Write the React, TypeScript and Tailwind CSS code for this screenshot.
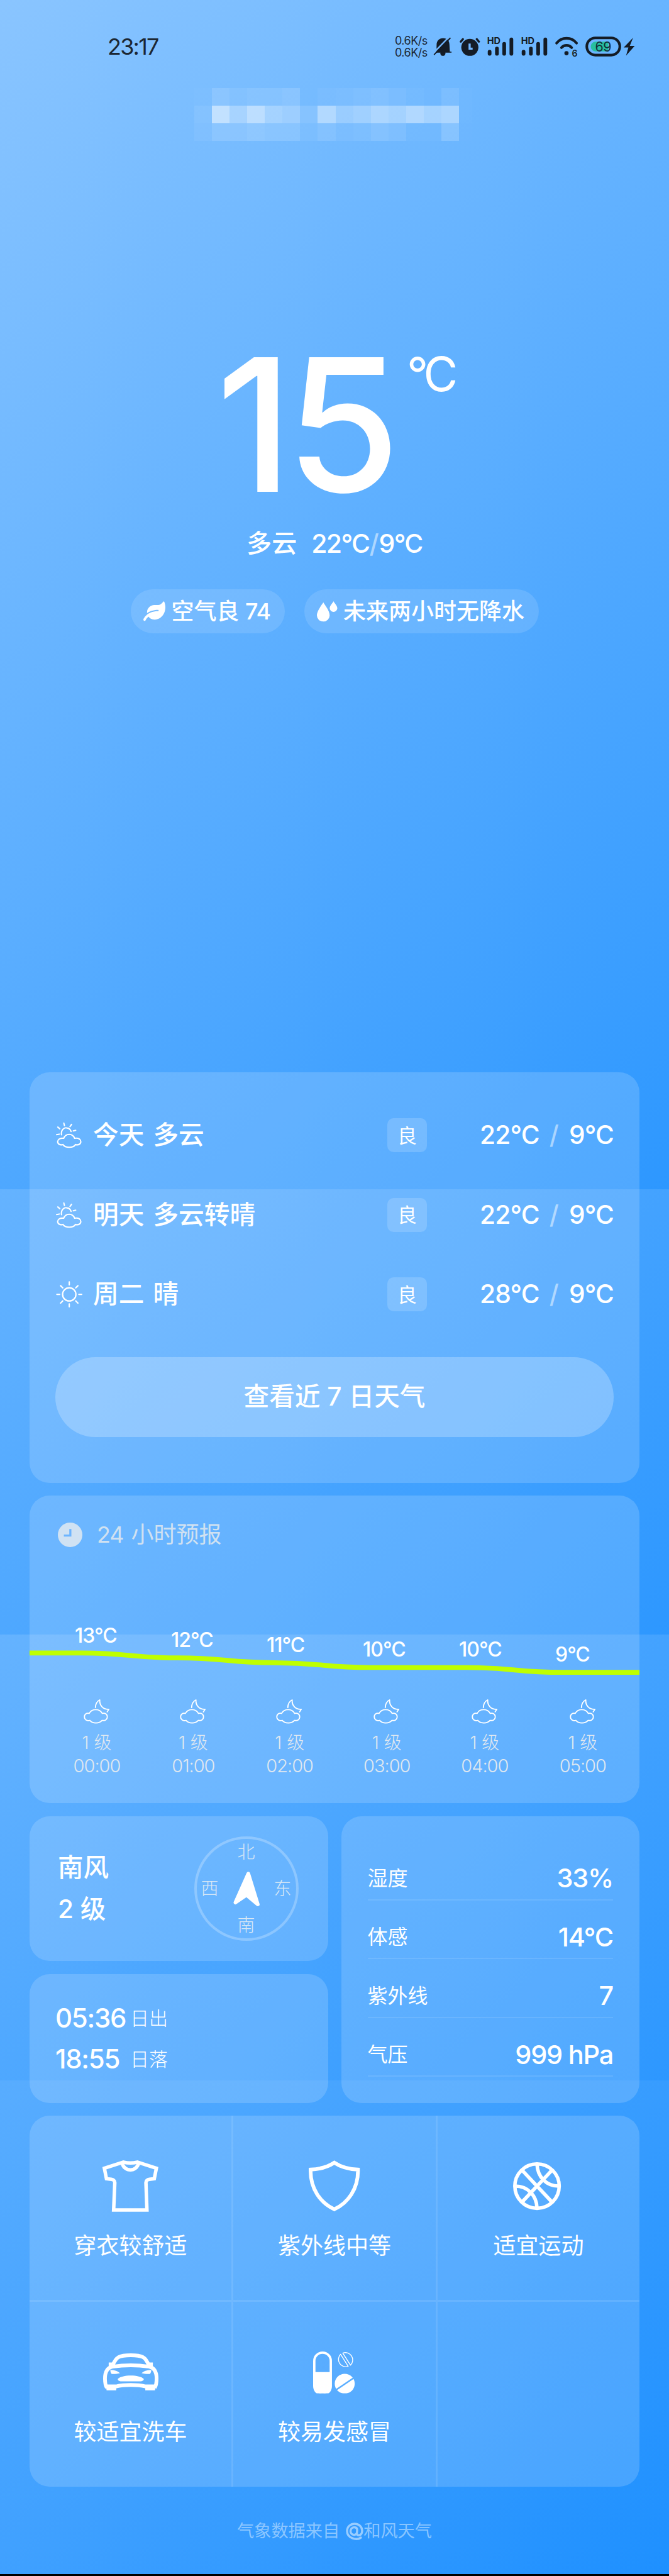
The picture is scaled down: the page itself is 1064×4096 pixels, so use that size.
import type { ReactNode } from "react";

const INK = "#141c26";

type DrawingProps = {
  width: number;
  height: number;
  box: string;
  className?: string;
  children: ReactNode;
};

function Drawing({ width, height, box, className = "", children }: DrawingProps) {
  return (
    <svg
      width={width}
      height={height}
      viewBox={box}
      fill="none"
      strokeLinecap="round"
      strokeLinejoin="round"
      className={`block shrink-0 overflow-visible ${className}`}
    >
      {children}
    </svg>
  );
}

/* ---------- status bar ---------- */

function MutedBell() {
  return (
    <Drawing width={28.8} height={28.8} box="0 0 39 39" className="ml-2">
      <path d="M20 1C11 1 6 7 6 15L5.5 30H34.5L33.5 14C33 6 29 1 20 1Z" fill={INK} />
      <path d="M6 31H37" stroke={INK} strokeWidth={2.6} />
      <circle cx={19.5} cy={33.5} r={5.6} fill={INK} />
      <path d="M-1 33L31 0" stroke="#74b8ff" strokeWidth={3.4} />
      <path d="M1 36L35 1" stroke={INK} strokeWidth={2.6} />
    </Drawing>
  );
}

function Alarm() {
  return (
    <Drawing width={32.5} height={28.8} box="0 0 44 39" className="ml-3">
      <circle cx={22} cy={20.7} r={18.4} fill={INK} />
      <path d="M2.5 8.5L7 3M41.5 8.5L37 3" stroke={INK} strokeWidth={4.6} />
      <path d="M21.5 12.5V23.5H28" stroke="#72b7ff" strokeWidth={4.6} strokeLinecap="butt" strokeLinejoin="miter" />
    </Drawing>
  );
}

function Signal() {
  return (
    <Drawing width={42} height={29.6} box="0 0 57 40" className="ml-3">
      <g fill={INK}>
        <rect x={1} y={27.5} width={8} height={12.5} rx={4} />
        <rect x={16.8} y={20.5} width={8} height={19.5} rx={4} />
        <rect x={32.5} y={10.5} width={8} height={29.5} rx={4} />
        <rect x={48} y={1} width={8} height={39} rx={4} />
        <text x={-0.5} y={15.5} fontSize={20} fontWeight={700} textLength={29} lengthAdjust="spacingAndGlyphs">
          HD
        </text>
      </g>
    </Drawing>
  );
}

function Wifi() {
  return (
    <Drawing width={36.2} height={31.8} box="0 0 49 43" className="ml-3">
      <path d="M3 14.3C14 0.5 35 0.5 46 14.3" stroke={INK} strokeWidth={5.6} />
      <path d="M13.5 24C19 17.5 30 17.5 35.5 24" stroke={INK} strokeWidth={5.6} />
      <circle cx={24.3} cy={36} r={4.5} fill={INK} />
      <text x={36} y={43} fontSize={19} fontWeight={600} fill={INK}>
        6
      </text>
    </Drawing>
  );
}

function Battery() {
  return (
    <Drawing width={57} height={31.8} box="0 0 77 43" className="ml-[11px]">
      <rect x={3} y={3} width={71} height={37} rx={18.5} stroke={INK} strokeWidth={5.6} />
      <path d="M49 11H22a10.5 10.5 0 0 0 0 21H49Z" fill="#27bfa0" />
      <text x={21} y={32.5} fontSize={29} fontWeight={400} fill="#12303a" textLength={35}>
        69
      </text>
    </Drawing>
  );
}

function Bolt() {
  return (
    <Drawing width={17.5} height={28.6} box="0 0 23.6 38.6" className="ml-1">
      <path d="M20 0L0 21H10L5 38.6L23.5 17.5H13Z" fill={INK} />
    </Drawing>
  );
}

function StatusBar() {
  return (
    <div className="flex h-10 items-center text-[#1c2733]">
      <span className="ml-[171px] text-[36px] leading-none tracking-[-0.05em]">23:17</span>
      <div className="ml-auto mr-[55px] flex items-center">
        <div className="flex w-[54px] flex-col text-[18px] leading-[19.4px] tracking-[-0.03em] whitespace-nowrap">
          <span>0.6K/s</span>
          <span>0.6K/s</span>
        </div>
        <MutedBell />
        <Alarm />
        <Signal />
        <Signal />
        <Wifi />
        <Battery />
        <Bolt />
      </div>
    </div>
  );
}

/* ---------- obscured location ---------- */

const MOSAIC = [
  [0.02, 0.13, 0.08, 0.11, 0.11, 0.14, 0, 0.04, 0.05, 0.08, 0.11, 0.07, 0.03, 0.01, 0.09, 0.02],
  [0.08, 0.55, 0.35, 0.51, 0.34, 0.29, 0.13, 0.45, 0.28, 0.33, 0.42, 0.37, 0.46, 0.38, 0.43, 0.02],
  [0.06, 0.14, 0.14, 0.18, 0.15, 0.15, 0.06, 0.12, 0.07, 0.09, 0.14, 0.11, 0.03, 0.03, 0.18, 0.01],
];

function Mosaic() {
  return (
    <div className="ml-[309px] mt-[46px] flex w-[442px] flex-col overflow-hidden">
      {MOSAIC.map((row, r) => (
        <div key={r} className="flex h-7">
          {row.map((alpha, c) => (
            <span
              key={c}
              className="h-full w-[28.07px] shrink-0"
              style={{ backgroundColor: `rgba(255,255,255,${alpha})` }}
            />
          ))}
        </div>
      ))}
    </div>
  );
}

/* ---------- current conditions ---------- */

function Leaf() {
  return (
    <Drawing width={35} height={31.5} box="0 0 576 512">
      <path
        fill="#fff"
        d="M546.2 9.7c-5.6-12.5-21.6-13-28.3-1.2C486.9 62.4 431.4 96 368 96h-80C182 96 96 182 96 288c0 7 .8 13.7 1.5 20.5C161.3 262.8 253.4 224 384 224c8.8 0 16 7.2 16 16s-7.2 16-16 16C132.6 256 26 410.1 2.4 468c-6.6 16.3 1.2 34.9 17.5 41.6 16.4 6.8 35-1.1 41.8-17.3 1.5-3.6 20.9-47.9 71.9-90.6 32.4 43.9 94 85.8 174.9 77.2C465.5 467.5 576 326.7 576 154.3c0-50.2-10.8-102.2-29.8-144.6z"
      />
    </Drawing>
  );
}

function Drops() {
  return (
    <Drawing width={32.5} height={32.5} box="0 0 44 44">
      <path fill="#fff" d="M13.8 2.5C16 7 27.5 20 27.5 30.5a13.75 13.3 0 0 1-27.5 0C0 20 11.5 7 13.8 2.5Z" />
      <path fill="#fff" d="M35.8 0C37 3 44 10 44 15a8.2 8 0 0 1-16.4 0C27.6 10 34.5 3 35.8 0Z" />
    </Drawing>
  );
}

function Hero() {
  return (
    <section className="mt-[304px] flex flex-col items-center text-white">
      <div className="flex items-start font-medium leading-none">
        <span className="ml-px text-[294px] tracking-[-0.036em]">15</span>
        <span className="ml-[21px] mt-[29px] text-[75px] font-normal tracking-[-0.09em]">°C</span>
      </div>
      <div className="mt-[14px] flex h-14 items-center text-[41px] font-medium leading-none">
        <span className="text-[40px]">多云</span>
        <span className="ml-[23px] tracking-[-0.04em]">22°C</span>
        <span className="text-white/50">/</span>
        <span className="tracking-[-0.04em]">9°C</span>
      </div>
      <div className="mt-[45px] flex gap-[31px] text-[36px] font-medium leading-none">
        <div className="flex h-[70px] w-[245px] items-center rounded-full bg-white/12 pl-5">
          <Leaf />
          <span className="ml-[10px] whitespace-nowrap">
            空气良 <span className="tracking-[-0.03em]">74</span>
          </span>
        </div>
        <div className="flex h-[70px] w-[373px] items-center rounded-full bg-white/12 pl-5">
          <Drops />
          <span className="ml-[10px] whitespace-nowrap">未来两小时无降水</span>
        </div>
      </div>
    </section>
  );
}

/* ---------- three day forecast ---------- */

function SunCloud() {
  return (
    <Drawing width={43} height={44.3} box="55 40 175 180">
      <g stroke="#fff" strokeWidth={8.5}>
        <path d="M109 150C122 116 167 116 180 150C205 144 220 158 220 171C220 186 205 196 186 190C170 214 120 214 104 190C85 196 70 186 70 171C70 158 85 146 109 150Z" />
        <path d="M95 127C90 95 112 80 127 82C142 83 153 92 157 106" />
        <path d="M110 51L114 67M160 60L150 74M187 98L171 102M71 77L84 88M63 126L80 123" />
      </g>
    </Drawing>
  );
}

function Sun() {
  return (
    <Drawing width={44.3} height={44.3} box="50 557 180 180">
      <g stroke="#fff" strokeWidth={9}>
        <circle cx={140} cy={647} r={43} />
        <path d="M140 567V585M140 709V727M60 647H78M202 647H220M182 605L196 591M98 605L84 591M182 689L196 703M98 689L84 703" />
      </g>
    </Drawing>
  );
}

const DAYS = [
  { icon: <SunCloud />, day: "今天", sky: "多云", air: "良", high: "22°C", low: "9°C" },
  { icon: <SunCloud />, day: "明天", sky: "多云转晴", air: "良", high: "22°C", low: "9°C" },
  { icon: <Sun />, day: "周二", sky: "晴", air: "良", high: "28°C", low: "9°C" },
];

function DailyCard() {
  return (
    <section className="mt-[698px] h-[653px] rounded-[32px] bg-white/16 px-[41px] pt-[37px]">
      {DAYS.map((d) => (
        <div key={d.day} className="flex h-[126.6px] items-center text-[40.7px] font-medium leading-none">
          <div className="w-[60px]">{d.icon}</div>
          <span>{d.day}</span>
          <span className="ml-[14px]">{d.sky}</span>
          <span className="ml-auto flex h-[54px] w-[63px] items-center justify-center rounded-[10px] bg-white/16 text-[31px] font-normal">
            {d.air}
          </span>
          <div className="flex w-[297px] items-center justify-end">
            <span className="tracking-[-0.02em]">{d.high}</span>
            <span className="ml-4 text-white/50">/</span>
            <span className="ml-4 tracking-[-0.02em]">{d.low}</span>
          </div>
        </div>
      ))}
      <button className="mt-[36px] flex h-[127px] w-full items-center justify-center rounded-full bg-white/24 text-[40.7px] font-medium leading-none">
        查看近 7 日天气
      </button>
    </section>
  );
}

/* ---------- hourly forecast ---------- */

const HOURS = [
  { temp: "13°C", time: "00:00", labelX: 72, level: 0, gap: "ml-[57px]" },
  { temp: "12°C", time: "01:00", labelX: 225, level: 1, gap: "ml-[53.4px]" },
  { temp: "11°C", time: "02:00", labelX: 377, level: 2, gap: "ml-[53.3px]" },
  { temp: "10°C", time: "03:00", labelX: 530, level: 3, gap: "ml-[54.6px]" },
  { temp: "10°C", time: "04:00", labelX: 683, level: 3, gap: "ml-[55.6px]" },
  { temp: "9°C", time: "05:00", labelX: 836, level: 4, gap: "ml-[56px]" },
];

function MoonCloud() {
  return (
    <Drawing width={42.4} height={41} box="88 44 172 166">
      <g stroke="#fff" strokeWidth={7.5}>
        <path d="M124 139C140 106 192 106 208 139C228 134 241 146 241 161C241 178 226 188 207 184C190 206 144 206 128 184C108 190 93 178 93 161C93 146 106 134 124 139Z" />
        <path d="M164 101C165 75 175 60 192 52C190 90 215 115 251 112L240 129" />
      </g>
    </Drawing>
  );
}

function HourlyChart() {
  const y = (level: number) => 40.4 + level * 7.7;
  const nodeX = (i: number) => 83 + i * 153;
  let d = `M0 ${y(0)}H${nodeX(0)}`;
  for (let i = 1; i < HOURS.length; i++) {
    const mid = (nodeX(i - 1) + nodeX(i)) / 2;
    d += `C${mid} ${y(HOURS[i - 1].level)} ${mid} ${y(HOURS[i].level)} ${nodeX(i)} ${y(HOURS[i].level)}`;
  }
  d += "H970";
  return (
    <svg width={970} height={90} viewBox="0 0 970 90" className="block overflow-visible">
      <path d={d} fill="none" stroke="#bfff00" strokeWidth={7.7} />
      {HOURS.map((h) => (
        <text
          key={h.time}
          x={h.labelX}
          y={24 + h.level * 7.45}
          fontSize={32}
          fontWeight={500}
          letterSpacing={-1}
          fill="#fff"
        >
          {h.temp}
        </text>
      ))}
    </svg>
  );
}

function HourlyCard() {
  return (
    <section className="mt-5 h-[489px] overflow-hidden rounded-[32px] bg-white/16">
      <div className="flex items-center pl-[45px] pt-[40px]">
        <Drawing width={39} height={39} box="0 0 53 53">
          <circle cx={26.5} cy={26.5} r={26.5} fill="#d0e2f3" />
          <path d="M27 14V28H13" stroke="#6db5ff" strokeWidth={4.5} strokeLinecap="butt" strokeLinejoin="miter" />
        </Drawing>
        <span className="ml-[23px] flex h-11 items-center text-[36px] leading-none text-[#d0e1f1]">
          <span className="tracking-[-0.03em]">24</span>
          <span className="ml-3">小时预报</span>
        </span>
      </div>
      <div className="mt-[126px]">
        <HourlyChart />
      </div>
      <div className="mt-[23px] flex">
        {HOURS.map((h) => (
          <div
            key={h.time}
            className={`${h.gap} flex w-[100px] shrink-0 flex-col items-center text-[28px] font-light leading-none text-[#e0e8f0]`}
          >
            <MoonCloud />
            <span className="mt-[15px]">1 级</span>
            <span className="mt-[8px] text-[29px] tracking-[-0.035em]">{h.time}</span>
          </div>
        ))}
      </div>
    </section>
  );
}

/* ---------- wind, sun and details ---------- */

function Compass() {
  return (
    <div className="relative grid h-[174px] w-[174px] grid-cols-3 grid-rows-3 place-items-center text-[28px] font-light leading-none text-[#d9e7f5]">
      <div className="absolute inset-1 rounded-full border-[4.5px] border-white/25" />
      <span className="col-start-2">北</span>
      <span className="col-start-1 row-start-2">西</span>
      <Drawing width={42} height={55} box="0 0 57 75" className="col-start-2 row-start-2">
        <path d="M32.5 4.5L53 71L28.5 50.5L4.5 67Z" fill="#fff" stroke="#fff" strokeWidth={8} />
      </Drawing>
      <span className="col-start-3 row-start-2">东</span>
      <span className="col-start-2 row-start-3">南</span>
    </div>
  );
}

function WindCard() {
  return (
    <section className="flex h-[230px] items-center rounded-[32px] bg-white/16 pl-[45px] pr-[43px]">
      <div className="flex flex-col gap-[25px] text-[40.5px] font-medium leading-none">
        <span>南风</span>
        <span>2 级</span>
      </div>
      <div className="ml-auto">
        <Compass />
      </div>
    </section>
  );
}

function SunCard() {
  const times = [
    ["05:36", "日出"],
    ["18:55", "日落"],
  ];
  return (
    <section className="mt-[21px] h-[205px] rounded-[32px] bg-white/16 pl-[41px] pt-[37px]">
      {times.map(([time, label]) => (
        <div key={time} className="flex h-[65.5px] items-center leading-none">
          <span className="w-[119px] text-[42px] font-medium tracking-[-0.03em]">{time}</span>
          <span className="text-[30px] font-light">{label}</span>
        </div>
      ))}
    </section>
  );
}

const DETAILS = [
  ["湿度", "33%"],
  ["体感", "14°C"],
  ["紫外线", "7"],
  ["气压", "999 hPa"],
];

function DetailsCard() {
  return (
    <section className="h-[456px] rounded-[32px] bg-white/16 px-[42px] pt-[40px]">
      {DETAILS.map(([label, value]) => (
        <div
          key={label}
          className="flex h-[93.5px] items-end justify-between border-b-[2.5px] border-white/10 pb-[12px] leading-none"
        >
          <span className="pb-[5px] text-[32px]">{label}</span>
          <span className="text-[41.5px] font-medium tracking-[-0.03em]">{value}</span>
        </div>
      ))}
    </section>
  );
}

/* ---------- living tips ---------- */

function Shirt() {
  return (
    <Drawing width={88.7} height={82} box="0 0 120 111">
      <g stroke="#fff" strokeWidth={7.5} strokeLinejoin="miter">
        <path d="M45 4C55 6.5 65 6.5 75 4L116 17L111.5 39.5L101 41C97 41.5 93.5 44 93.5 48L95.7 107H24L26.5 48C26.5 44 23 41.5 19 41L8.5 39.5L4 17Z" />
        <path d="M42 5C46 26 74 26 78 5" strokeLinecap="butt" />
      </g>
    </Drawing>
  );
}

function Shield() {
  return (
    <Drawing width={81.3} height={82} box="0 0 110 111">
      <path
        d="M55 5C43 13 26 19 4 20C3 62 26 92 55 105.5C84 92 107 62 106 20C84 19 67 13 55 5Z"
        stroke="#fff"
        strokeWidth={8}
        strokeLinejoin="miter"
      />
    </Drawing>
  );
}

function Basketball() {
  return (
    <Drawing width={76.2} height={76.2} box="-51.5 -51.5 103 103" className="mr-[5px]">
      <g stroke="#fff" strokeWidth={7.5}>
        <circle r={47.7} />
        <path d="M-32 -34L32 34M32 -34L-32 34M0 -47C1 -20 20 0 47 0M0 47C-1 20 -20 0 -47 0" />
      </g>
    </Drawing>
  );
}

function Car() {
  return (
    <Drawing width={88} height={59.2} box="0 0 119 80">
      <g stroke="#fff" strokeWidth={8} strokeLinecap="butt">
        <path d="M21 25C28 8 34 4 59.5 4C85 4 91 8 98 25" />
        <path d="M8 74C5.5 70 4 62 4 54C4 40 9 31 20 28.5C45 25 74 25 99 28.5C110 31 115 40 115 54C115 62 113.5 70 111 74" />
        <path d="M9 71H28C45 67 74 67 91 71H110" />
      </g>
      <g fill="#fff">
        <path d="M12 19.7H20V28H12ZM99 19.7H107V28H99Z" />
        <path d="M5.7 68H28.3V79.5H7.5ZM90.7 68H113.3L111.5 79.5H90.7Z" />
        <path d="M15.5 35.7C24 35.5 32 38 36.4 42.7C30 44.5 24 44.5 18.4 44.3C16.5 42 15.5 39 15.5 35.7ZM103.5 35.7C95 35.5 87 38 82.6 42.7C89 44.5 95 44.5 100.6 44.3C102.5 42 103.5 39 103.5 35.7Z" />
        <path d="M31.5 55C40 45 79 45 87.5 55C87.5 58 84 60 80 60H39C35 60 31.5 58 31.5 55Z" />
      </g>
    </Drawing>
  );
}

function Pills() {
  return (
    <Drawing width={66.2} height={66.5} box="0 0 89.5 90" className="mr-px">
      <clipPath id="pill-base">
        <rect x={-1} y={-1} width={92} height={91} />
      </clipPath>
      <g clipPath="url(#pill-base)">
        <rect x={2.5} y={2.5} width={35.5} height={90} rx={17.7} stroke="#fff" strokeWidth={5} />
        <path d="M2 44.3H38.5V74C38.5 97 2 97 2 74Z" fill="#fff" />
        <circle cx={68} cy={69.5} r={21.5} fill="#fff" />
        <path d="M48 83.5L88 56.5" stroke="#5aaeff" strokeWidth={3.4} strokeLinecap="butt" />
        <g stroke="#fff" strokeWidth={1.9}>
          <path d="M59 6A15.8 15.8 0 0 0 75.5 32Z" />
          <path d="M63.8 3.5A15.8 15.8 0 0 1 80.5 29.5Z" />
        </g>
      </g>
    </Drawing>
  );
}

function Tip({ icon, label }: { icon?: ReactNode; label?: string }) {
  return (
    <div className="flex flex-col items-center border-white/10 not-[:nth-child(3n)]:border-r-3 [&:nth-child(-n+3)]:border-b-3">
      <div className="mt-[67px] flex h-[90px] items-center">{icon}</div>
      <span className="mt-[32px] text-[36px] leading-none">{label}</span>
    </div>
  );
}

function TipsCard() {
  return (
    <section className="mt-5 grid h-[590px] grid-cols-[324px_325px_1fr] grid-rows-[296px_1fr] overflow-hidden rounded-[32px] bg-white/16">
      <Tip icon={<Shirt />} label="穿衣较舒适" />
      <Tip icon={<Shield />} label="紫外线中等" />
      <Tip icon={<Basketball />} label="适宜运动" />
      <Tip icon={<Car />} label="较适宜洗车" />
      <Tip icon={<Pills />} label="较易发感冒" />
      <Tip />
    </section>
  );
}

function Footer() {
  return (
    <footer className="mt-[50px] flex h-[42px] items-center justify-center text-[27.2px] leading-none text-white/45">
      <span>气象数据来自</span>
      <Drawing width={28} height={28} box="0 0 28 28" className="ml-[10px]">
        <path
          d="M24 24C17 29 2 25 2 13.5C2 6 8 2 14 2C21 2 26 7 26 13C26 19 22 21 19 20C16.5 19 18 15 18 12C18 9 16 7.5 13.5 7.5C10 7.5 7.5 10.5 7.5 14C7.5 18 11 20 14 19.5C17 19 18 16 18 13"
          stroke="#fff"
          strokeOpacity={0.5}
          strokeWidth={3.4}
        />
      </Drawing>
      <span>和风天气</span>
    </footer>
  );
}

/* ---------- backdrop ---------- */

function Backdrop() {
  return (
    <div className="absolute inset-0 -z-10 flex flex-col">
      <div className="h-[1891px] bg-[linear-gradient(135deg,#8ac5ff,#1e90ff)] bg-[length:1064px_2364px]" />
      <div className="h-[708px] bg-[linear-gradient(135deg,#8ac5ff,#1e90ff)] bg-[length:1064px_2364px] bg-[position:0_-1182px]" />
      <div className="h-[709px] bg-[linear-gradient(135deg,#8ac5ff,#1e90ff)] bg-[length:1064px_2364px] bg-[position:0_-1182px]" />
      <div className="h-[785px] bg-[linear-gradient(135deg,#8ac5ff,#1e90ff)] bg-[length:1064px_2364px] bg-[position:0_-1576px]" />
      <div className="h-[3px] bg-black" />
    </div>
  );
}

export default function App() {
  return (
    <main className="relative isolate h-[4096px] w-[1064px] overflow-hidden pt-[54px] font-['Inter','Noto_Sans_CJK_SC',sans-serif] text-white">
      <Backdrop />
      <StatusBar />
      <Mosaic />
      <Hero />
      <div className="mx-[47px]">
        <DailyCard />
        <HourlyCard />
        <div className="mt-[21px] grid grid-cols-2 gap-[21px]">
          <div>
            <WindCard />
            <SunCard />
          </div>
          <DetailsCard />
        </div>
        <TipsCard />
      </div>
      <Footer />
    </main>
  );
}
